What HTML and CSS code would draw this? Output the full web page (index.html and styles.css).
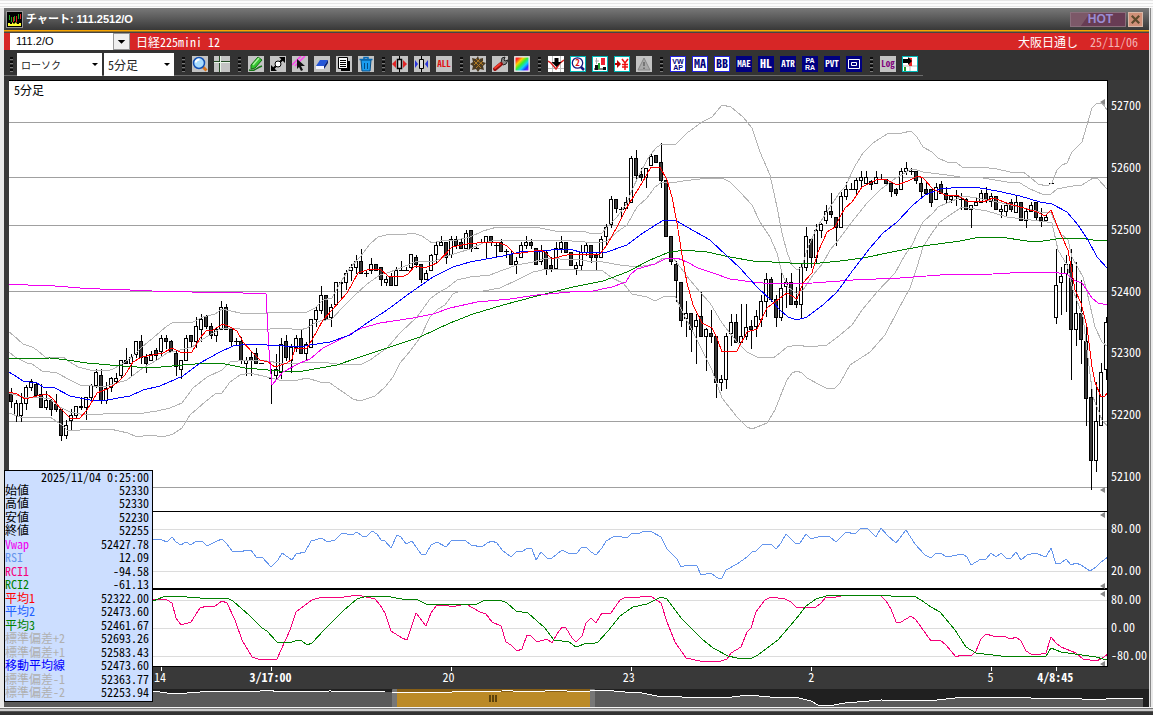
FILE: index.html
```html
<!DOCTYPE html>
<html lang="ja">
<head>
<meta charset="utf-8">
<title>チャート: 111.2512/O</title>
<link rel="stylesheet" href="styles.css">
</head>
<body>
<main class="window">
  <header class="titlebar">
    <svg class="app-icon" viewBox="0 0 17 17" aria-hidden="true"><rect width="17" height="17" fill="#999"/><rect x="1" y="1" width="15" height="15" fill="#000"/><path d="M3.500 4v5M5.500 6v5M8.500 5v5M12.500 3v5" stroke="#1fa01f"/><path d="M7.500 6v5M10.500 5v6M14.500 3v5" stroke="#d22"/><path d="M2 15v-3h2v1h2v-2l2 2 2-2 1 2h2v-1h2v3z" fill="#ff3"/></svg>
    <h1 class="title">チャート: 111.2512/O</h1>
    <button class="hot" type="button">HOT</button>
    <button class="close" type="button" aria-label="閉じる"><svg viewBox="0 0 14 14"><path d="M3 3l8 8M11 3l-8 8" stroke="#5d4a2c" stroke-width="2.400"/></svg></button>
  </header>
  <section class="symbolbar">
    <input class="symbol" type="text" value="111.2/O" aria-label="銘柄コード">
    <button class="drop" type="button" aria-label="銘柄一覧"><svg viewBox="0 0 16 15"><path d="M4 6h8l-4 4z" fill="#000"/></svg></button>
    <span class="name">日経225mini 12</span>
    <span class="market">大阪日通し</span>
    <time class="expiry">25/11/06</time>
  </section>
  <nav class="toolbar" aria-label="ツール">
    <i class="grip"></i>
    <span class="combos">
      <label class="combo wide"><select aria-label="足の種類"><option>ローソク</option></select></label>
      <label class="combo"><select aria-label="期間"><option>5分足</option></select></label>
    </span>
    <i class="grip"></i>
    <button class="tool" type="button" aria-label="拡大"><svg viewBox="0 0 16 16"><path d="M10.500 10.500l4 4" stroke="#d8741c" stroke-width="3"/><circle cx="7" cy="7" r="5.500" fill="#a8dcff" stroke="#1350b4" stroke-width="1.500"/><path d="M3.500 6.500q1-3 4-3" stroke="#fff" stroke-width="2" fill="none"/></svg></button>
    <button class="tool" type="button" aria-label="十字線"><svg viewBox="0 0 16 16"><path d="M0 5.500h16M5.500 0v16" stroke="#244a24" stroke-width="1"/><path d="M0 6.500h16M6.500 0v16" stroke="#e8f4e8"/></svg></button>
    <i class="grip"></i>
    <button class="tool" type="button" aria-label="描画"><svg viewBox="0 0 16 16"><path d="M3 9l7-8 4 3-7 8-4 1z" fill="#36c432" stroke="#126b12"/><path d="M5 9l6-7" stroke="#a6f39a" stroke-width="1.500"/><path d="M1 14q4 1 7-1t6-3" fill="none" stroke="#157315" stroke-width="1.500"/></svg></button>
    <button class="tool" type="button" aria-label="移動"><svg viewBox="0 0 16 16"><path d="M2 14L14 2" stroke="#000" stroke-width="2"/><path d="M15 1v6l-6-6zM1 15V9l6 6z" fill="#000"/><circle cx="8" cy="8" r="3" fill="#fff" stroke="#000"/></svg></button>
    <button class="tool" type="button" aria-label="選択"><svg viewBox="0 0 16 16"><path d="M0 9L9 0M3 10L13 0" stroke="#f4e" stroke-width="1.500"/><path d="M5 3l8 7-4 0 2 4-2 1-2-4-2 2z" fill="#111"/></svg></button>
    <button class="tool" type="button" aria-label="消しゴム"><svg viewBox="0 0 16 16"><path d="M6 4h8l-4 6H2z" fill="#2456d8"/><path d="M2 10h8v3H2z" fill="#f6f6ff"/><path d="M10 10l4-6v3l-4 6z" fill="#06207c"/></svg></button>
    <button class="tool" type="button" aria-label="コピー"><svg viewBox="0 0 16 16"><path d="M5 5h9v10H5z" fill="#000"/><path d="M2.500 1.500h9v11h-9z" fill="#fff" stroke="#000"/><path d="M4 4.500h6M4 6.500h6M4 8.500h6M4 10.500h6" stroke="#000"/></svg></button>
    <button class="tool" type="button" aria-label="削除"><svg viewBox="0 0 16 16"><path d="M3 4h10l-1 11H4z" fill="#1a9cf0" stroke="#044d86"/><path d="M1.500 3.500h13M6 3V1.500h4V3" stroke="#0668b4" stroke-width="1.500" fill="none"/><path d="M6.500 7v6M9.500 7v6" stroke="#044d86"/></svg></button>
    <i class="grip"></i>
    <button class="tool" type="button" aria-label="間隔を広げる"><svg viewBox="0 0 16 16"><path d="M7.500 0v16" stroke="#000"/><path d="M5.500 3.500h4v9h-4z" fill="#ddd" stroke="#000" stroke-width="1.500"/><path d="M0 8l4-4v8zM15 8l-4-4v8z" fill="#e12424"/></svg></button>
    <button class="tool" type="button" aria-label="間隔を狭める"><svg viewBox="0 0 16 16"><path d="M7.500 0v16" stroke="#000"/><path d="M5.500 3.500h4v9h-4z" fill="#ddd" stroke="#000"/><path d="M4 8L1 4v8zM11 8l3-4v8z" fill="#2934dc"/></svg></button>
    <button class="tool" type="button"><svg viewBox="0 0 16 16"><text class="cap red" x="8" y="11">ALL</text></svg></button>
    <i class="grip"></i>
    <button class="tool" type="button" aria-label="設定"><svg viewBox="0 0 16 16"><path d="M8 0l1 3 4-1 0 4 3 1-3 3 1 4-4-1-2 3-2-3-4 1 1-4-3-2 3-2-1-4 4 1z" fill="#4a3a22"/><path d="M4 5l7 7M6 3l7 6M4 9l6-6M6 12l7-7" stroke="#b07a22"/></svg></button>
    <button class="tool" type="button" aria-label="調整"><svg viewBox="0 0 16 16"><path d="M9 7l1-5 3-1-1 3 1 1 3-1-2 4-3 1z" fill="#888" stroke="#222"/><path d="M3 13l6-5" stroke="#941010" stroke-width="4" stroke-linecap="round"/><path d="M3 12l5-4" stroke="#f33b2c" stroke-width="2" stroke-linecap="round"/></svg></button>
    <button class="tool" type="button" aria-label="配色"><svg viewBox="0 0 16 16"><defs><linearGradient id="hue" x1="0" y1="0" x2="1" y2="1"><stop offset=".15" stop-color="#f22"/><stop offset=".32" stop-color="#fc0"/><stop offset=".48" stop-color="#3e3"/><stop offset=".65" stop-color="#1cf"/><stop offset=".8" stop-color="#23f"/><stop offset="1" stop-color="#c2e"/></linearGradient></defs><path d="M1 1h14v14H1z" fill="url(#hue)" stroke="#eee"/></svg></button>
    <i class="grip"></i>
    <button class="tool" type="button" aria-label="売買サイン"><svg viewBox="0 0 16 16"><path d="M0 0h16v16H0z" fill="#fff"/><path d="M4.500 0v16M12.500 0v16M0 12.500h16" stroke="#bbb"/><path d="M0 5l3 2 5 6 4-6 4-3" stroke="#d22" fill="none" stroke-width="1.500"/><path d="M6.500 2h4v4h3l-5 5-5-5h3z" fill="#000"/></svg></button>
    <button class="tool cyan" type="button" aria-label="検索"><svg viewBox="0 0 16 16"><path d="M10 10l4 4" stroke="#16167c" stroke-width="2.500"/><circle cx="7.500" cy="7" r="5.200" fill="#fff" stroke="#16167c" stroke-width="1.300"/><text class="cap red" x="7.500" y="10">2</text></svg></button>
    <button class="tool cyan" type="button" aria-label="出来高"><svg viewBox="0 0 16 16"><path d="M2 13h12" stroke="#000"/><path d="M3 9h3v5H3zM11 11h3v3h-3z" fill="#111"/><path d="M4.500 2v6M3 5h4" stroke="#aaa"/><path d="M9 2h4v7H9z" fill="#e23"/><path d="M6 7h2v6H6z" fill="#2a3"/></svg></button>
    <button class="tool cyan" type="button" aria-label="円換算"><svg viewBox="0 0 16 16"><path d="M7 8L3 4v3H1v2h2v3z" fill="#b00"/><path d="M8 3l3 4 3-4M11 7v7M8 8.500h6M8 11h6" stroke="#e11" stroke-width="1.500" fill="none"/></svg></button>
    <button class="tool" type="button" aria-label="警告" disabled><svg viewBox="0 0 16 16"><path d="M8 2l6 12H2z" fill="#aaa" stroke="#888"/><path d="M8 6v4M8 11.500v1.500" stroke="#666" stroke-width="1.500"/></svg></button>
    <i class="grip"></i>
    <button class="tool lit" type="button"><svg viewBox="0 0 16 16"><text class="cap stack" x="8" y="8">VW</text><text class="cap stack" x="8" y="14">AP</text></svg></button>
    <button class="tool lit" type="button"><svg viewBox="0 0 16 16"><text class="cap big" x="8" y="12">MA</text></svg></button>
    <button class="tool lit" type="button"><svg viewBox="0 0 16 16"><text class="cap big" x="8" y="12">BB</text></svg></button>
    <button class="tool navy" type="button"><svg viewBox="0 0 16 16"><text class="cap" x="8" y="11">MAE</text></svg></button>
    <button class="tool navy" type="button"><svg viewBox="0 0 16 16"><text class="cap big" x="8" y="12">HL</text></svg></button>
    <button class="tool navy" type="button"><svg viewBox="0 0 16 16"><text class="cap" x="8" y="11">ATR</text></svg></button>
    <button class="tool navy" type="button"><svg viewBox="0 0 16 16"><text class="cap stack" x="8" y="7">PA</text><text class="cap stack" x="8" y="14">RA</text></svg></button>
    <button class="tool navy" type="button"><svg viewBox="0 0 16 16"><text class="cap" x="8" y="11">PVT</text></svg></button>
    <button class="tool navy" type="button" aria-label="枠"><svg viewBox="0 0 16 16"><path d="M2.500 3.500h11v9h-11zM5.500 6.500h5v3h-5z" fill="none" stroke="#fff"/></svg></button>
    <i class="grip"></i>
    <button class="tool" type="button"><svg viewBox="0 0 16 16"><text class="cap purple" x="8" y="11">Log</text></svg></button>
    <button class="tool cyan" type="button" aria-label="右端へ"><svg viewBox="0 0 16 16"><path d="M8 1v14M1 10h14" stroke="#bbb"/><path d="M7 2h3v8H7z" fill="#e22"/><path d="M1 3h5V1l4 4-4 4V7H1z" fill="#000"/><path d="M2 11h2v4H2z" fill="#292"/></svg></button>
  </nav>
  <section class="workspace">
    <div class="plot">
      <span class="plot-label">5分足</span>
      <svg id="chart" viewBox="9 81 1098 585" preserveAspectRatio="none" role="img" aria-label="日経225mini 5分足チャート">
        <g class="grid"><path d="M9 122.500H1108M9 177.500H1108M9 225.500H1108M9 291.500H1108M9 421.500H1108M9 487.500H1108"/><path class="soft" d="M9 529.500H1108M9 571.500H1108M9 600.500H1108M9 628.500H1108M9 656.500H1108"/></g>
        <g id="candles"></g>
        <g class="lines">
          <polyline class="band" points="9,332 13,335 23,344 32,347 37,350 45,357 63,357 70,362 78,367 90,370 107,371 113,369 122,364 132,357 142,347 153,338 167,326 172,323 193,322 203,317 215,314 222,309 240,313 252,314 267,313 280,312 287,312 307,312 315,308 323,300 332,298 342,280 350,268 360,257 370,244 378,237 390,234 402,235 413,233 422,236 432,243 440,241 457,240 470,237 483,231 497,227 513,228 530,227 540,228 555,231 583,231 592,234 602,233 607,227 617,217 627,203 632,190 640,173 650,155 657,147 662,144 676,144 687,133 702,122 712,117 722,105 731,107 743,117 752,128 760,152 770,175 777,207 782,233 787,252 792,265 797,270 802,267 807,250 817,227 823,218 830,207 840,192 845,187 855,166 863,153 873,143 887,134 893,133 902,133 911,131 917,137 923,147 932,152 938,158 947,162 957,163 962,167 980,167 997,169 1010,172 1023,172 1030,177 1038,184 1047,186 1052,183 1057,170 1062,165 1067,163 1072,152 1077,147 1082,142 1087,125 1092,108 1097,103 1102,103 1108,111"/>
          <polyline class="band" points="9,352 15,357 27,363 32,364 42,371 57,373 70,380 80,385 93,386 107,386 127,380 143,368 157,360 167,353 180,350 192,347 203,339 213,333 222,328 240,329 270,329 283,328 300,330 307,328 313,324 320,321 332,319 342,308 353,297 367,284 380,275 390,272 403,267 417,261 435,261 447,256 457,253 470,249 483,243 497,240 517,241 540,240 560,240 597,243 607,241 617,232 627,225 637,207 647,198 655,187 662,182 677,182 683,181 700,179 722,178 730,182 740,192 752,205 760,222 770,237 777,253 782,273 788,287 797,294 803,290 813,275 823,263 830,250 840,238 855,218 867,203 880,190 893,180 903,174 912,169 917,170 923,172 947,175 960,177 983,178 1007,182 1020,183 1030,189 1042,194 1051,194 1057,189 1067,187 1073,186 1082,185 1093,178 1098,179 1108,190"/>
          <polyline class="band" points="9,393 23,397 37,397 50,399 60,407 70,412 80,414 103,414 115,413 137,414 157,411 170,408 182,403 193,388 207,377 222,370 230,362 247,360 267,361 280,363 300,363 320,362 337,364 360,365 370,360 387,348 400,333 417,317 430,299 438,293 447,288 457,280 470,277 490,275 503,270 517,265 533,262 547,258 560,259 577,259 587,261 603,262 620,265 637,267 655,264 663,258 673,258 680,267 690,280 700,292 710,303 722,323 737,342 747,352 757,357 773,358 780,353 787,347 797,345 810,347 827,345 840,335 852,325 862,310 877,292 895,273 905,255 912,245 918,232 923,222 933,213 938,207 947,203 957,199 962,196 977,198 997,202 1020,207 1040,212 1051,213 1060,233 1068,240 1072,257 1083,277 1087,292 1095,327 1102,342 1108,347"/>
          <polyline class="band" points="9,413 20,417 50,417 62,425 67,430 80,430 87,429 110,429 128,433 137,437 150,435 163,437 173,434 182,428 190,415 205,402 215,394 222,393 230,382 240,375 250,373 267,377 283,381 298,380 307,378 320,382 330,383 343,392 353,399 360,401 375,396 385,387 393,377 400,363 407,355 420,338 430,317 438,309 445,305 453,294 460,291 483,291 500,288 517,280 533,272 547,269 577,270 603,271 612,278 623,283 632,294 647,297 655,301 663,297 675,296 683,313 693,332 703,352 712,370 722,398 737,417 747,427 752,429 767,423 775,410 782,392 787,380 792,373 797,371 802,373 807,378 820,385 828,389 835,388 840,383 850,365 870,352 885,335 898,310 910,288 917,267 923,247 932,233 940,222 950,215 962,207 987,211 1007,217 1023,219 1047,222 1052,223 1058,250 1067,265 1073,290 1083,317 1087,350 1093,397 1102,420 1108,427"/>
          <polyline class="green" points="9,359 50,358 67,360 87,363 110,365 150,368 183,365 207,363 225,364 245,368 280,371 303,371 337,365 360,357 387,348 420,337 450,323 473,314 503,305 537,296 573,287 603,281 627,272 650,260 667,253 683,250 707,252 730,257 753,261 790,263 820,263 840,261 863,258 897,251 923,246 960,241 980,237 1000,237 1027,241 1043,241 1063,238 1080,238 1093,240 1108,240"/>
          <polyline class="vwap" points="9,284 28,285 55,286 80,288 100,289 130,290 152,291 192,292 240,292 243,293 266,294 269,350 272,385 283,372 300,363 310,359 323,348 343,338 362,328 380,323 413,318 433,314 450,308 477,302 510,299 537,295 570,292 593,291 612,287 626,282 630,275 637,269 655,264 667,258 677,258 687,262 698,268 713,273 730,279 753,282 773,284 813,283 840,281 853,280 900,278 940,275 993,274 1027,272 1051,272 1067,274 1073,280 1082,283 1092,298 1098,303 1108,305"/>
          <polyline class="blue" points="9,372 17,377 23,381 37,383 43,387 55,388 70,396 80,398 90,400 107,400 130,396 143,390 160,386 183,376 200,363 220,352 233,346 250,344 267,345 300,347 310,345 330,342 350,335 367,323 387,310 410,293 433,277 453,267 470,262 503,256 520,252 543,251 560,249 573,250 580,252 607,252 627,245 643,233 662,221 675,220 687,227 710,240 727,256 740,268 757,287 773,302 780,310 788,317 797,320 807,317 823,305 837,292 853,270 870,248 883,233 897,222 913,205 925,195 940,189 962,187 980,188 997,191 1020,196 1040,202 1052,204 1067,212 1078,225 1088,240 1097,257 1108,269"/>
          <polyline class="red" points="9,392 17,394 25,399 37,396 47,394 53,399 60,408 70,418 80,418 87,410 97,393 107,389 117,383 125,375 133,362 142,357 163,353 172,348 180,352 192,352 200,338 207,330 213,330 223,324 230,327 237,331 243,342 252,352 260,360 268,362 275,367 287,363 292,359 295,348 307,348 312,340 323,320 332,310 347,293 358,273 370,269 380,269 388,276 402,277 408,274 415,266 425,268 437,263 452,247 467,244 487,242 500,243 507,246 515,254 528,252 540,250 545,252 552,259 562,256 573,254 590,255 600,254 607,245 617,227 627,207 642,183 651,167 660,167 667,180 672,197 677,223 682,255 687,283 693,305 702,323 712,328 717,338 722,352 737,351 747,332 757,329 767,308 780,298 787,293 797,299 803,283 812,273 818,252 827,232 835,227 840,217 845,208 852,202 862,187 878,179 887,180 897,185 908,181 918,176 923,178 933,189 947,196 957,195 967,201 983,202 993,198 1010,204 1027,209 1037,212 1045,216 1051,210 1058,228 1068,250 1072,272 1075,290 1081,303 1087,327 1092,367 1095,382 1101,397 1105,396 1108,392"/>
          <polyline class="rsi" points="153,539 162,540 167,542 172,537 176,542 181,545 186,542 191,545 196,541 202,541 207,546 217,541 222,539 227,544 232,551 242,552 245,550 251,550 256,557 262,557 271,567 278,560 282,553 292,560 296,554 305,552 311,541 322,538 327,542 335,540 342,533 352,535 357,532 362,536 367,536 372,531 377,534 381,540 385,541 391,548 397,535 401,537 406,544 412,541 421,554 426,554 431,545 437,542 446,547 452,540 466,541 471,545 482,547 487,543 492,541 497,543 502,550 511,557 517,551 522,552 527,548 532,549 536,560 541,552 547,558 552,558 562,550 568,553 577,553 581,548 586,547 591,552 596,555 602,548 606,541 615,536 622,537 627,538 632,533 637,534 645,531 652,532 661,537 667,549 677,559 681,567 687,565 697,566 701,575 711,573 719,579 722,578 726,570 737,564 747,557 752,552 756,551 762,545 771,544 776,549 781,543 786,534 796,544 800,543 806,534 811,539 821,536 830,537 836,542 846,532 855,534 861,528 867,528 876,537 881,528 887,535 896,543 906,530 915,544 925,555 931,558 936,553 941,553 946,557 963,554 967,557 971,565 981,559 986,559 991,553 996,557 1001,553 1006,558 1011,558 1016,552 1021,560 1027,555 1035,553 1046,557 1051,548 1056,564 1061,563 1066,559 1071,565 1076,563 1081,565 1090,571 1096,567 1101,562 1108,557"/>
          <polyline class="pink" points="153,599 167,600 172,603 176,618 181,625 191,622 200,608 207,606 215,606 222,601 227,603 235,620 242,640 252,657 258,659 277,659 290,630 296,612 312,600 322,597 337,598 358,595 375,599 380,605 385,613 391,631 402,638 407,640 416,613 426,626 431,613 437,605 447,605 451,607 466,604 480,612 486,614 492,622 501,626 506,642 511,645 517,651 522,649 527,635 531,636 537,642 547,639 552,643 557,634 562,627 566,628 572,638 576,642 582,636 586,623 591,618 596,623 602,613 611,613 620,600 626,597 640,597 647,596 652,597 661,603 667,622 675,642 686,658 700,661 721,661 727,659 731,653 741,647 747,632 751,628 756,612 765,600 771,597 785,599 791,602 796,607 816,607 821,603 826,597 836,597 845,595 881,596 886,601 891,609 896,622 901,622 911,616 916,620 931,641 940,640 946,645 956,657 961,655 972,655 976,651 981,639 986,634 993,636 1003,636 1011,639 1016,637 1021,641 1026,651 1031,654 1041,654 1046,653 1051,637 1056,643 1061,647 1076,653 1083,659 1096,661 1101,659 1108,654"/>
          <polyline class="green" points="153,601 163,597 172,596 187,597 200,598 227,598 233,601 250,616 262,628 267,631 277,642 290,643 297,640 302,641 307,645 312,643 325,629 343,611 357,599 367,596 385,596 402,599 416,599 426,604 477,604 485,600 500,600 507,603 516,611 528,613 537,621 545,628 554,640 569,642 576,647 587,643 592,644 598,642 608,631 620,616 633,607 647,604 661,597 667,599 681,618 702,639 713,648 728,656 737,658 752,658 758,655 770,646 778,640 796,619 806,606 816,599 826,596 843,595 888,595 891,596 914,596 921,600 931,607 940,612 955,630 966,647 976,653 1001,656 1021,656 1028,657 1046,656 1051,648 1061,652 1075,654 1096,657 1103,659 1108,659"/>
        </g>
        <path class="divider" d="M9 511h1099v1H9zM9 588h1099v2H9z"/>
        <path class="marks" d="M1100 102l5-3v6zM1100 490l5-3v6zM1100 515l5-3v6zM1100 586l5-3v6zM1100 594l5-3v6zM1100 664l5-3v6z"/>
      </svg>
    </div>
    <svg class="yaxis" aria-label="価格軸"><text x="3" y="30">52700</text><text x="3" y="92">52600</text><text x="3" y="154">52500</text><text x="3" y="216">52400</text><text x="3" y="277">52300</text><text x="3" y="339">52200</text><text x="3" y="401">52100</text><text x="3" y="453">80.00</text><text x="3" y="495">20.00</text><text x="3" y="524">80.00</text><text x="3" y="552">0.00</text><text x="3" y="580">-80.00</text></svg>
    <svg class="xaxis" aria-label="時間軸"><g class="ticks"><line x1="13.850%" x2="13.850%" y1="0" y2="4"/><line x1="23.860%" x2="23.860%" y1="0" y2="4"/><line x1="40.240%" x2="40.240%" y1="0" y2="4"/><line x1="56.620%" x2="56.620%" y1="0" y2="4"/><line x1="73%" x2="73%" y1="0" y2="4"/><line x1="89.380%" x2="89.380%" y1="0" y2="4"/><line x1="95.300%" x2="95.300%" y1="0" y2="4"/></g><text x="13.750%" y="15">14</text><text class="day" x="23.800%" y="15">3/17:00</text><text x="40%" y="15">20</text><text x="56.400%" y="15">23</text><text x="73%" y="15">2</text><text x="89.300%" y="15">5</text><text class="day" x="95.200%" y="15">4/8:45</text></svg>
    <div class="overview">
      <svg viewBox="4 689 1145 18" preserveAspectRatio="none" role="img" aria-label="全期間"><polygon class="area" points="4,707 4,691 153,691 167,693 187,693 213,691 260,691 267,690 280,692 385,692 452,692 502,691 508,690 518,692 545,691 585,691 602,690 625,692 642,693 662,697 668,696 682,697 732,697 748,695 770,697 795,697 811,701 818,705 828,706 845,703 881,700 928,701 955,698 981,697 1021,697 1041,699 1065,698 1098,700 1115,698 1143,698 1143,707"/><path fill="#bb8a27" d="M397 692H590V707H397z"/><path fill="#875f16" d="M397 689H590V692H397z"/><path fill="#777" d="M392 690q0-1 1-1h4v18h-5zM590 689h4q1 0 1 1v17h-5z"/><path fill="#5d430c" d="M489 695h2v7h-2zM492 695h2v7h-2zM495 695h2v7h-2z"/><polyline class="trace" points="153,691 167,693 187,693 213,691 260,691 267,690 280,692 330,691 385,692 392,692 397,692 452,692 502,691 508,690 518,692 545,691 549,690 585,692 590,691 602,690 625,692 642,693 662,697 668,696 682,697 732,697 748,695 770,697 795,697 811,701 818,705 828,706 845,703 881,700 928,701 955,698 981,697 1021,697 1041,699 1065,698 1098,700 1115,698 1143,698"/></svg>
    </div>
    <table class="quote">
      <caption>2025/11/04 0:25:00</caption>
      <tbody>
        <tr><th>始値</th><td>52330</td></tr>
        <tr><th>高値</th><td>52330</td></tr>
        <tr><th>安値</th><td>52230</td></tr>
        <tr><th>終値</th><td>52255</td></tr>
        <tr class="c-vwap"><th>Vwap</th><td>52427.78</td></tr>
        <tr class="c-rsi"><th>RSI</th><td>12.09</td></tr>
        <tr class="c-pink"><th>RCI1</th><td>-94.58</td></tr>
        <tr class="c-green"><th>RCI2</th><td>-61.13</td></tr>
        <tr class="c-red"><th>平均1</th><td>52322.00</td></tr>
        <tr class="c-azure"><th>平均2</th><td>52473.60</td></tr>
        <tr class="c-green"><th>平均3</th><td>52461.67</td></tr>
        <tr class="c-band"><th>標準偏差+2</th><td>52693.26</td></tr>
        <tr class="c-band"><th>標準偏差+1</th><td>52583.43</td></tr>
        <tr class="c-blue"><th>移動平均線</th><td>52473.60</td></tr>
        <tr class="c-band"><th>標準偏差-1</th><td>52363.77</td></tr>
        <tr class="c-band"><th>標準偏差-2</th><td>52253.94</td></tr>
      </tbody>
    </table>
  </section>
</main>
<footer class="frame-bottom"></footer>
<script src="chart.js"></script>
</body>
</html>
```
FILE: styles.css
```css
* { box-sizing: border-box; }
body {
  margin: 0;
  min-height: 100vh;
  background: #e9e9e9;
  font-family: "Noto Sans Mono CJK JP", "Noto Sans CJK JP", sans-serif;
  font-size: 12px;
  color: #fff;
  display: flex;
  flex-direction: column;
  overflow-x: hidden;
}
button, input, select { font: inherit; margin: 0; padding: 0; border: 0; border-radius: 0; }
body::before {
  content: "";
  height: 8px;
  background: repeating-linear-gradient(#e6e6e6 0 1px, #fcfcfc 1px 3px);
}
.window {
  margin: 0 4px;
  background: #393939;
  box-shadow: 1px 0 #ddd, 2px 0 #888;
}
.titlebar {
  height: 25px;
  padding: 3px 6px 0 2px;
  display: flex;
  align-items: flex-start;
  gap: 2px;
  background: linear-gradient(#787878, #383838 22px, #f7a400 22px, #f7a400 23px, #444 24px);
}
.app-icon { width: 17px; height: 17px; }
.title {
  margin: 0;
  flex: 1;
  padding-left: 1px;
  font: bold 11px/17px "Liberation Sans", "Noto Sans CJK JP", sans-serif;
}
.hot {
  width: 56px;
  height: 15px;
  margin-top: 1px;
  padding-left: 5px;
  border: 1px solid #8a6f7c;
  background: linear-gradient(125deg, #7c5868 15px, #683c54 16px);
  color: #9a8cd2;
  font: bold 12px/13px "Liberation Sans", sans-serif;
}
.close {
  width: 15px;
  height: 15px;
  margin-top: 1px;
  border: 1px solid #d8b8a8;
  background: #d09078;
}
.close svg { display: block; width: 13px; height: 13px; }
.symbolbar {
  height: 17px;
  padding: 0 11px 0 6px;
  display: flex;
  background: #d72626;
  line-height: 17px;
}
.symbol {
  width: 103px;
  padding-left: 6px;
  background: #fff;
  color: #000;
  font-family: "Liberation Sans", sans-serif;
  font-size: 11px;
}
.drop { width: 17px; height: 17px; background: #f0f0f0; border: 1px solid #999; }
.drop svg { display: block; width: 15px; height: 15px; }
.name { margin-left: 6px; flex: 1; }
.expiry { margin-left: 12px; color: #f4b4b4; }
.toolbar {
  height: 30px;
  padding: 2px 0 4px 6px;
  display: flex;
  align-items: center;
  gap: 6px;
  background: linear-gradient(#6c6c6c, #6c6c6c) 0 25px / 919px 1px no-repeat, #333;
}
.combos { display: flex; gap: 2px; margin-left: -2px; }
.grip {
  width: 3px;
  height: 15px;
  margin: 0 1px 0 2px;
  background: repeating-linear-gradient(#0c0c0c 0 2px, #777 2px 3px, #333 3px 4px);
}
.grip:first-child { margin: 0; }
.combo { position: relative; width: 70px; height: 23px; }
.combo.wide { width: 85px; }
.combo select {
  width: 100%;
  height: 100%;
  padding-left: 4px;
  appearance: none;
  background: #fff;
  color: #222;
}
.combo.wide select { font-size: 10px; }
.combo::after {
  content: "";
  position: absolute;
  right: 4px;
  top: 10px;
  border: 3px solid transparent;
  border-top-color: #000;
}
.tool { width: 16px; height: 16px; flex: none; background: #c3c3c3; }
.tool svg { display: block; width: 100%; height: 100%; overflow: hidden; }
.cyan { background: #fff; box-shadow: inset 0 0 0 1px #00b8b8; }
.lit { background: #fff; box-shadow: inset 0 0 0 1px #2222e0; }
.navy { background: #000080; }
.cap {
  font: bold 9px "Noto Sans Mono CJK JP", "Liberation Sans", sans-serif;
  text-anchor: middle;
  fill: #00007c;
}
.cap.big { font-size: 12px; }
.cap.stack { font: bold 7px "Liberation Sans", sans-serif; }
.navy .cap { fill: #fff; }
.cap.red { fill: #e01010; }
.cap.purple { fill: #80007c; }
.workspace {
  position: relative;
  display: grid;
  grid-template-columns: 1fr 41px;
  grid-template-rows: 587px 22px 18px;
  padding-left: 5px;
  font-size: 12px;
}
.plot {
  position: relative;
  background: #fff;
  border-top: 1px solid #000;
  border-right: 1px solid #000;
  border-bottom: 1px solid #000;
}
.plot-label { position: absolute; left: 5px; top: 0; color: #000; line-height: 17px; }
#chart { display: block; width: 100%; height: 100%; }
.grid path { stroke: #a0a0a0; }
.grid .soft { stroke: #dcdcdc; }
.lines polyline { fill: none; stroke-width: 1; shape-rendering: crispEdges; }
.lines .band { stroke: #b4b4b4; }
.lines .green { stroke: #008000; }
.lines .vwap { stroke: #f000f0; }
.lines .blue { stroke: #0000ff; }
.lines .red { stroke: #ff0000; }
.lines .rsi { stroke: #6495ed; }
.lines .pink { stroke: #f5007a; }
#candles { shape-rendering: crispEdges; }
.wick { stroke: #000; }
.rise { fill: #fff; stroke: #000; }
.fall { fill: #383838; stroke: #000; }
.divider { fill: #000; }
.marks { fill: #888; }
.yaxis, .xaxis { display: block; width: 100%; height: 100%; overflow: visible; }
.yaxis text, .xaxis text { fill: #fff; }
.xaxis { grid-column: 1; }
.xaxis text { text-anchor: middle; }
.xaxis .day { font-weight: bold; }
.ticks line { stroke: #fff; shape-rendering: crispEdges; }
.overview { grid-column: 1 / -1; margin-left: -5px; background: #202020; }
.overview svg { display: block; width: 100%; height: 100%; }
.area { fill: #5a5a5a; }
.trace { fill: none; stroke: #fff; shape-rendering: crispEdges; }
.quote {
  position: absolute;
  left: 0;
  bottom: 5px;
  width: 149px;
  padding: 0 3px 3px 0;
  border: 1px solid #000;
  border-top: 0;
  border-spacing: 0;
  background: #ccdeff;
  color: #000;
  line-height: 13px;
}
.quote caption {
  padding: 0 3px 0 0;
  border: 1px solid #000;
  border-bottom: 0;
  background: #ccdeff;
  line-height: 11px;
  text-align: right;
}
.quote th { padding: 0; font-weight: normal; text-align: left; white-space: nowrap; }
.quote td { padding: 0; color: #000; text-align: right; }
.quote tr { height: 14px; }
.quote tr:nth-child(even) { height: 13px; }
.c-vwap { color: #f000f0; }
.c-rsi { color: #6495ed; }
.c-pink { color: #f5007a; }
.c-green { color: #008000; }
.c-red { color: #ff0000; }
.c-azure { color: #2060ff; }
.c-band { color: #b0b0b0; }
.c-blue { color: #0000ff; }
.frame-bottom {
  flex: 1;
  background: linear-gradient(#f4f4f4 0 1px, #777 1px 2px, #ccc 2px 4px, #555 4px 5px, #333 5px);
}
```
FILE: chart.js
```js
// One entry per 5-minute bar: high, body top, body bottom, low; "f" marks a falling bar.
const bars = `388 392 401 407 f|400 403 415 421|393 403 415 421|385 387 403 409|379 381 387 390|382 384 395 397 f|384 394 407 407 f|391 400 407 409|399 400 409 415 f|394 404 409 411 f|409 409 435 440 f|420 425 435 438|409 415 420 430|406 406 415 418|397 406 407 409|397 397 407 419|384 385 397 402|369 372 385 387|369 375 400 403 f|382 388 400 403|377 378 387 391|373 378 381 383|360 360 375 378|348 360 363 363 f|354 357 363 375|341 341 354 357|335 341 357 363 f|354 357 363 372 f|351 354 360 360|348 350 355 360 f|335 338 351 355|335 338 341 348 f|340 341 351 351 f|351 353 366 375 f|360 360 369 378|335 338 360 360|335 335 341 347 f|317 326 341 347|314 319 329 341|315 316 326 328 f|323 326 335 338 f|327 329 335 341|301 307 329 329|304 307 329 329 f|329 329 341 345 f|338 341 341 344|337 341 360 363 f|357 360 363 375|351 357 360 375 f|348 353 363 363 f|363 363 363 363||369 378 378 403|354 369 375 378|338 344 372 378|335 341 357 360 f|344 347 360 372|335 338 347 351|329 338 353 353 f|342 344 353 360|319 319 347 347|307 310 319 326|286 295 310 313|295 295 319 319 f|304 307 317 326|282 282 304 304|280 282 283 298|270 273 282 289|264 267 270 280|255 261 267 273|249 261 273 273 f|270 273 273 276|258 264 270 273|264 264 270 270 f|267 267 279 285 f|276 279 282 285|273 276 285 285 f|267 270 285 285|261 270 270 270|267 270 270 270|254 254 267 270|255 257 264 267 f|264 264 279 282 f|270 273 279 279|254 255 270 270|242 245 254 262|236 242 245 245|242 242 257 263 f|236 239 254 257|236 239 245 248 f|238 242 248 248 f|230 233 248 248|230 230 248 251 f|243 248 248 248|239 242 242 243|236 236 242 258|236 236 242 245 f|242 245 245 257|239 242 251 251 f|249 251 251 257|251 254 264 264 f|257 261 264 273|242 245 257 257|236 242 245 248|239 242 245 248 f|248 248 264 264 f|245 251 261 264|251 252 268 274 f|257 265 268 271 f|242 248 268 268|236 242 248 252|242 242 252 252 f|252 252 265 265 f|262 265 268 274|245 252 265 270|242 245 252 255|245 245 257 262 f|253 255 257 270 f|236 239 257 257|224 227 236 245|196 199 224 227|199 199 208 212 f|207 209 209 218|197 202 208 208|156 158 202 202|150 158 175 179 f|168 174 177 180 f|168 168 177 187|153 156 165 165|155 155 162 162 f|143 162 180 187 f|180 180 236 236 f|236 236 261 264 f|261 264 280 301 f|282 282 320 326 f|301 313 318 336|313 313 329 351 f|314 320 326 363|292 316 336 336 f|328 329 336 370|310 333 336 342 f|336 336 382 397 f|375 379 382 390|333 336 379 388|314 322 333 345|314 322 342 342 f|304 336 342 342|304 327 336 339|320 326 329 348 f|310 316 326 336|295 301 319 326|273 279 301 316|277 279 299 301 f|295 299 317 326 f|273 288 317 320|278 282 286 307|273 282 304 304 f|287 301 304 307 f|263 267 304 317|227 236 267 270|239 239 257 267 f|224 230 257 262|223 224 230 237|205 211 220 223|193 211 214 217 f|217 217 227 245 f|192 196 227 227|182 189 196 199|183 189 189 189|178 180 189 193|171 177 180 186|171 177 183 183|180 181 184 189 f|171 177 183 183|174 179 179 179|179 179 183 183 f|183 183 191 196 f|188 189 193 195 f|168 171 189 189|162 168 171 174|168 171 171 174|171 171 180 183 f|177 183 191 196 f|183 189 193 193 f|189 189 202 206 f|183 187 199 199|181 184 193 193 f|187 193 199 202 f|195 196 199 202|190 196 196 205|193 199 199 209|198 199 209 209 f|205 205 209 227|197 202 205 205|190 193 202 202|187 193 199 202 f|193 196 201 206|196 196 209 209 f|205 209 211 217|202 205 211 215|199 202 209 211 f|196 202 212 212|202 202 220 220 f|208 211 220 227|202 205 211 211|202 202 217 220 f|208 217 220 226 f|214 217 220 220|183 183 183 183|249 285 317 323|267 276 282 314|255 264 273 311|249 264 329 379 f|262 313 329 345|280 313 339 363 f|327 341 398 425 f|389 397 460 489 f|382 421 460 471|363 372 425 425|317 322 369 379`.split("|");

const FIRST_X = 11;
const STEP = 5;
const layer = document.getElementById("candles");

function add(tag, attrs) {
  const el = document.createElementNS("http://www.w3.org/2000/svg", tag);
  for (const key in attrs) el.setAttribute(key, attrs[key]);
  layer.appendChild(el);
}

bars.forEach((bar, i) => {
  if (!bar) return;
  const [high, top, bottom, low, dir] = bar.split(" ");
  const x = FIRST_X + i * STEP;
  add("line", { class: "wick", x1: x + 0.5, x2: x + 0.5, y1: high, y2: +low + 1 });
  if (top === bottom) {
    add("line", { class: "wick", x1: x - 2, x2: x + 3, y1: +top + 0.5, y2: +top + 0.5 });
  } else {
    add("rect", { class: dir ? "fall" : "rise", x: x - 1.5, y: +top + 0.5, width: 3, height: bottom - top });
  }
});
```
